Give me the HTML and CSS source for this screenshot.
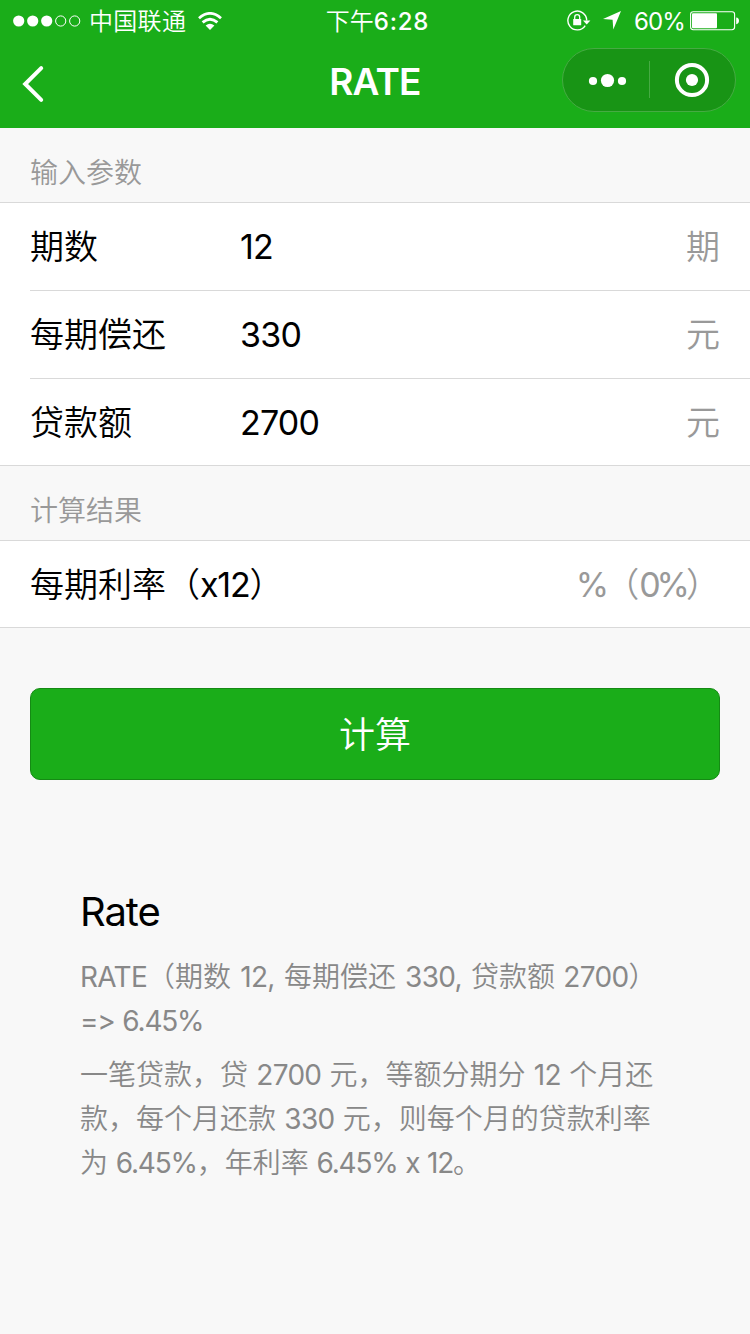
FILE: index.html
```html
<!DOCTYPE html>
<html lang="zh-CN">
<head>
<meta charset="utf-8">
<title>RATE</title>
<link rel="stylesheet" href="styles.css">
</head>
<body>
<header class="header">
  <div class="status">
    <div class="status-left">
      <svg class="signal" width="68" height="12" viewBox="0 0 68 12"><g fill="#fff"><circle cx="5.7" cy="6" r="5.6"/><circle cx="19.7" cy="6" r="5.6"/><circle cx="33.7" cy="6" r="5.6"/></g><g fill="none" stroke="#fff"><circle cx="47.7" cy="6" r="5.1"/><circle cx="61.7" cy="6" r="5.1"/></g></svg>
      <span class="carrier">中国联通</span>
      <svg class="wifi" width="24" height="18" viewBox="0 0 24 18"><g fill="none" stroke="#fff" stroke-width="2.8"><path d="M1 6.2Q12-3.4 23 6.2"/><path d="M4.6 10.4Q12 4 19.4 10.4"/></g><path d="M7.6 13.5Q12 10 16.4 13.5L12 18Z" fill="#fff"/></svg>
    </div>
    <div class="clock">下午<span class="time">6:28</span></div>
    <div class="status-right">
      <svg class="lock" width="24" height="22" viewBox="0 0 24 22"><path d="M18.2 15.6A9.4 9.4 0 1 1 19.7 10.5" fill="none" stroke="#fff" stroke-width="1.4"/><path d="M16 10.5H23.4L19.7 14.6Z" fill="#fff"/><rect x="6.2" y="9" width="8" height="6.2" rx=".5" fill="#fff"/><path d="M7.7 9.5V7.2a2.5 2.5 0 0 1 5 0V9.5" fill="none" stroke="#fff" stroke-width="1.3"/></svg>
      <svg class="arrow" width="18" height="19" viewBox="0 0 18 19"><path d="M18 0L0 8.1L9.6 8.7L10.3 18.4Z" fill="#fff"/></svg>
      <span class="percent">60%</span>
      <svg class="battery" width="50" height="20" viewBox="0 0 50 20"><rect x=".6" y=".7" width="44" height="18" rx="2.6" fill="none" stroke="#fff" stroke-width="1.1"/><rect x="2" y="2.2" width="25" height="15" rx="1" fill="#fff"/><path d="M46.2 6.5Q49 6.8 49 9.8T46.2 13.2Z" fill="#fff"/></svg>
    </div>
  </div>
  <div class="nav">
    <svg class="back" width="24" height="38" viewBox="0 0 24 38"><path d="M20.2 3.2L4.2 19L20.2 34.8" fill="none" stroke="#fff" stroke-width="4" stroke-linecap="round"/></svg>
    <h1 class="nav-title">RATE</h1>
    <div class="capsule">
      <svg width="174" height="64" viewBox="0 0 174 64"><rect x=".5" y=".5" width="173" height="63" rx="31.5" fill="#189415" stroke="#46ab43"/><path d="M87.5 13V50" stroke="#46ab43"/><g fill="#fff"><circle cx="31" cy="33" r="4.1"/><circle cx="45.5" cy="32.5" r="6.6"/><circle cx="60" cy="33" r="4.1"/><circle cx="130" cy="32" r="6.1"/></g><circle cx="130" cy="32" r="15.1" fill="none" stroke="#fff" stroke-width="4"/></svg>
    </div>
  </div>
</header>
<main>
  <h2 class="section-title">输入参数</h2>
  <section class="cells">
    <div class="cell"><span class="label">期数</span><span class="value">12</span><span class="unit">期</span></div>
    <div class="cell"><span class="label">每期偿还</span><span class="value">330</span><span class="unit">元</span></div>
    <div class="cell last"><span class="label">贷款额</span><span class="value">2700</span><span class="unit">元</span></div>
  </section>
  <h2 class="section-title">计算结果</h2>
  <section class="cells">
    <div class="cell last"><span class="label-wide">每期利率（<span class="num">x12</span>）</span><span class="unit"><span class="rate">%</span>（<span class="rate">0%</span>）</span></div>
  </section>
  <button class="submit" type="button">计算</button>
  <article class="doc">
    <h3 class="doc-title">Rate</h3>
    <p><span class="lat">RATE</span>（期数<span class="lat arg"> 12, </span>每期偿还<span class="lat arg"> 330, </span>贷款额<span class="lat"> 2700</span>）<br><span class="lat pct">=&gt; 6.45%</span></p>
    <p>一笔贷款，贷<span class="lat"> 2700 </span>元，等额分期分<span class="lat"> 12 </span>个月还<br>款，每个月还款<span class="lat"> 330 </span>元，则每个月的贷款利率<br>为<span class="lat pct"> 6.45%</span>，年利率<span class="lat pct"> 6.45% x 12</span>。</p>
  </article>
</main>
</body>
</html>
```
FILE: styles.css
```css
* { box-sizing: border-box; }
body {
  margin: 0;
  min-height: 1334px;
  background: #f8f8f8;
  color: #000;
  font-family: Inter, "Noto Sans CJK SC", sans-serif;
  font-weight: 350;
}
h1, h2, h3, p { margin: 0; font-weight: inherit; }
svg { display: block; }

.header { height: 128px; background: #1aad19; color: #fff; }
.status {
  display: grid;
  grid-template-columns: 1fr auto 1fr;
  height: 40px;
  padding: 0 10px 0 13px;
  align-items: center;
  font-size: 24px;
  line-height: 38px;
}
.status-left, .status-right { display: flex; align-items: center; }
.status-right { justify-content: flex-end; }
.carrier { margin: 0 12px 0 8px; padding-top: 3px; letter-spacing: .3px; }
.clock { padding: 3px 0 0 2px; white-space: nowrap; }
.time { font-weight: 500; letter-spacing: .8px; }
.lock { margin-right: 12px; }
.arrow { margin-right: 13px; }
.percent { margin-right: 5px; padding-top: 3px; font-weight: 400; letter-spacing: -.9px; }

.nav {
  display: grid;
  grid-template-columns: 1fr auto 1fr;
  align-items: center;
  height: 80px;
  padding: 0 14px 0 21px;
}
.back { margin-top: 7px; }
.nav-title {
  margin-right: 7px;
  padding-top: 4px;
  font-size: 37px;
  font-weight: 600;
  line-height: 44px;
  letter-spacing: -.8px;
}
.capsule { justify-self: end; }

.section-title {
  height: 74px;
  padding: 25px 30px 0;
  color: #999;
  font-size: 28px;
  line-height: 40px;
}
.cells { background: #fff; border: solid #d9d9d9; border-width: 1px 0; }
.cell {
  display: flex;
  align-items: center;
  height: 88px;
  margin-left: 30px;
  padding-right: 30px;
  font-size: 34px;
  line-height: 48px;
  border-bottom: 1px solid #d9d9d9;
}
.cell.last { height: 86px; padding-top: 1px; border-bottom: 0; }
.label { width: 210px; }
.value { flex: 1; font-weight: 400; letter-spacing: -.8px; }
.unit { margin-left: auto; color: #999; }
.num { font-weight: 400; letter-spacing: -1.2px; }
.rate { font-weight: 400; letter-spacing: -4px; }

.submit {
  display: block;
  width: 690px;
  height: 92px;
  margin: 60px auto 0;
  padding: 1px 0 0;
  border: 1px solid #158a14;
  border-radius: 10px;
  background: #1aad19;
  color: #fff;
  font: inherit;
  font-size: 36px;
  line-height: 88px;
}
.doc { padding: 102px 79px 0 80px; color: #888; font-size: 28px; line-height: 44px; white-space: nowrap; }
.doc-title { margin-bottom: 13px; color: #000; font-size: 40px; font-weight: 400; line-height: 60px; letter-spacing: -1.1px; }
.doc p { margin-bottom: 10px; }
.lat { font-weight: 400; letter-spacing: -.7px; word-spacing: 1.1px; white-space: pre; }
.arg { word-spacing: 2px; }
.pct { letter-spacing: -1.2px; word-spacing: 1px; }
```
